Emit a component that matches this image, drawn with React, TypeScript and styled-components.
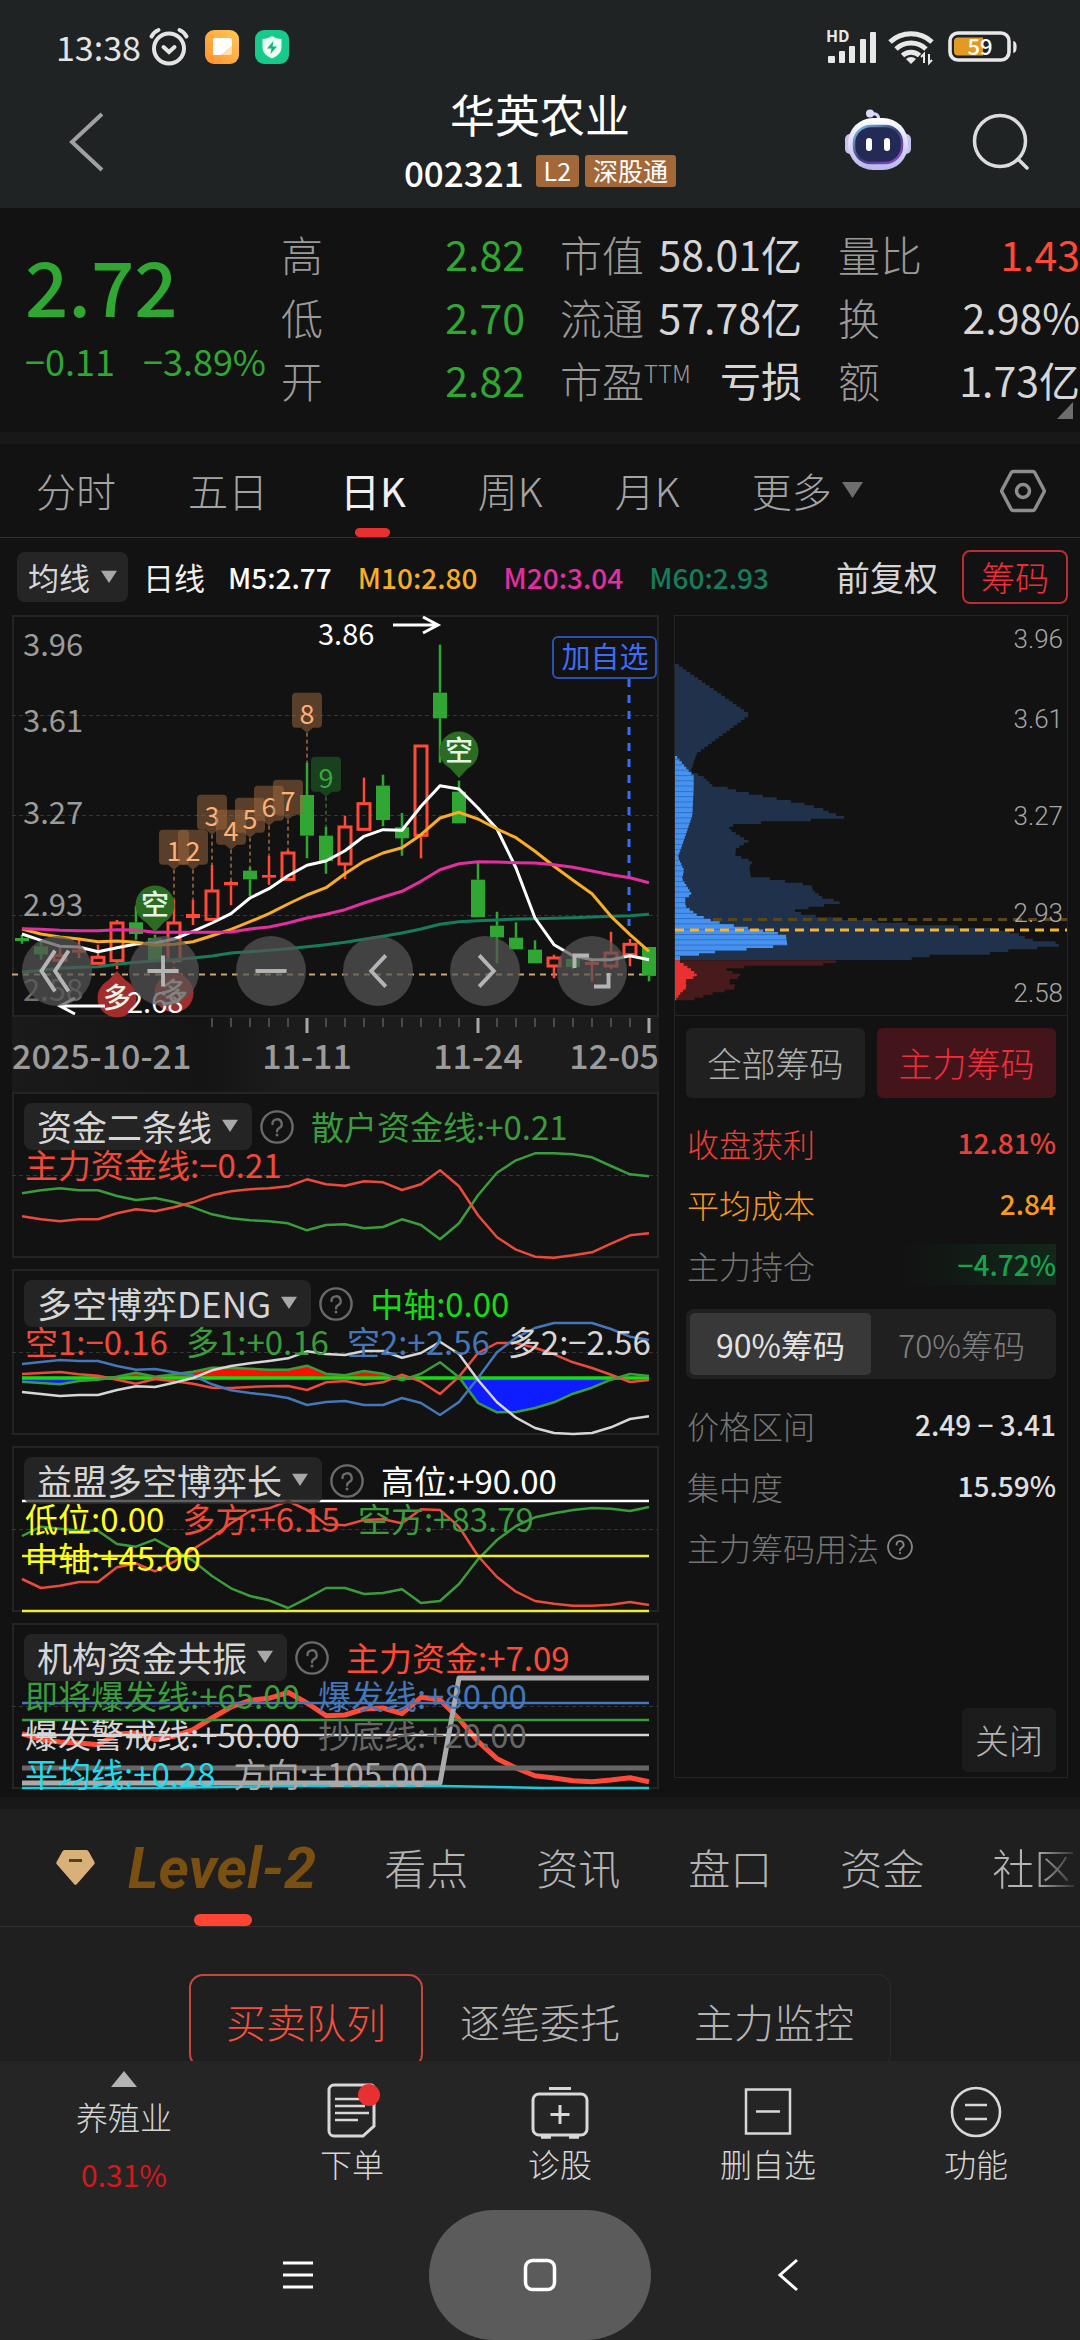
import React from 'react';
import styled, { createGlobalStyle } from 'styled-components';

const color = {
  page: '#121212',
  header: '#202323',
  band: '#181818',
  panel: '#1f1f1f',
  dock: '#252525',
  line: '#242424',
  label: '#9a9a9a',
  value: '#d6d6d6',
  green: '#30a633',
  red: '#ff4a37',
  alert: '#e93030',
};

const GlobalStyle = createGlobalStyle`
  *, *::before, *::after { box-sizing: border-box; }
  body {
    margin: 0;
    background: ${color.page};
    font-family: "Noto Sans CJK SC", "Noto Sans", sans-serif;
    color: ${color.value};
  }
  button {
    font: inherit;
    color: inherit;
    background: none;
    border: 0;
    padding: 0;
    cursor: pointer;
    white-space: nowrap;
  }
  h1, dl, dd, dt, p { margin: 0; font-weight: inherit; }
  svg { display: block; flex: none; overflow: visible; }
`;

const Screen = styled.div`
  display: flex;
  flex-direction: column;
  height: 100vh;
  overflow: hidden;
  line-height: 1;
`;

/* ---------- status bar and title ---------- */

const StatusBar = styled.div`
  display: flex;
  justify-content: space-between;
  align-items: center;
  flex: none;
  height: 93px;
  padding: 0 62px 0 56px;
  background: ${color.header};
`;

const StatusGroup = styled.div<{ $gap: number }>`
  display: flex;
  align-items: center;
  gap: ${(p) => p.$gap}px;
`;

const Clock = styled.span`
  margin-right: -8px;
  font-size: 34px;
  color: #e4e4e4;
`;

const TitleBar = styled.header`
  display: grid;
  grid-template-columns: 1fr auto 1fr;
  flex: none;
  height: 115px;
  padding: 0 50px;
  background: ${color.header};
`;

const BackButton = styled.button`
  justify-self: start;
  align-self: start;
  margin: 19px 0 0 18px;
`;

const TitleStack = styled.div`
  display: flex;
  flex-direction: column;
  align-items: center;
  gap: 17px;
`;

const StockName = styled.h1`
  font-size: 45px;
  line-height: 42px;
  color: #fff;
`;

const CodeRow = styled.div`
  display: flex;
  align-items: center;
  height: 38px;
  gap: 6px;
`;

const Code = styled.span`
  margin-right: 6px;
  font-size: 35px;
  font-weight: 500;
  color: #fff;
`;

const Badge = styled.span`
  padding: 3px 8px 5px;
  border-radius: 3px;
  background: #a3683a;
  font-size: 25px;
  line-height: 24px;
  color: #fff;
`;

const TitleActions = styled.div`
  display: flex;
  justify-content: flex-end;
  align-items: flex-start;
  gap: 62px;
  padding-top: 16px;
`;

/* ---------- quote ---------- */

const Quote = styled.section`
  position: relative;
  display: grid;
  grid-template-columns: 256px 244px 277px 1fr;
  flex: none;
  height: 224px;
  padding: 14px 0 0 25px;
`;

const PriceBlock = styled.div`
  color: ${color.green};
`;

const Price = styled.div`
  padding-top: 20px;
  font-size: 76px;
  font-weight: 500;
  line-height: 84px;
`;

const Change = styled.div`
  display: flex;
  gap: 28px;
  padding-top: 8px;
  font-size: 36px;
  line-height: 52px;
  white-space: nowrap;
`;

const Facts = styled.dl<{ $start: number }>`
  display: grid;
  grid-auto-rows: 63px;
  padding-left: ${(p) => p.$start}px;
`;

const Fact = styled.div`
  display: flex;
  justify-content: space-between;
  align-items: center;
  white-space: nowrap;

  dt { font-size: 42px; font-weight: 300; color: ${color.label}; }
  sup { font-size: 24px; line-height: 0; vertical-align: 15px; }
`;

const FactValue = styled.dd<{ $tone?: string }>`
  font-size: 41px;
  color: ${(p) => p.$tone ?? color.value};
`;

const ExpandMark = styled.svg`
  position: absolute;
  right: 7px;
  bottom: 13px;
`;

const Band = styled.div`
  flex: none;
  height: 12px;
  background: ${color.band};
`;

/* ---------- period tabs ---------- */

const PeriodTabs = styled.nav`
  display: flex;
  align-items: stretch;
  flex: none;
  gap: 72px;
  height: 94px;
  padding: 0 34px 0 36px;
  border-bottom: 1px solid #303030;
`;

const PeriodTab = styled.button<{ $active?: boolean }>`
  display: flex;
  align-items: center;
  gap: 10px;
  position: relative;
  padding-bottom: 2px;
  font-size: 40px;
  font-weight: ${(p) => (p.$active ? 400 : 300)};
  color: ${(p) => (p.$active ? '#f0f0f0' : '#a4a4a4')};

  &::after {
    content: "";
    display: ${(p) => (p.$active ? 'block' : 'none')};
    position: absolute;
    left: 50%;
    bottom: 0;
    width: 35px;
    height: 9px;
    margin-left: -18px;
    border-radius: 5px;
    background: ${color.alert};
  }
`;

const SettingsButton = styled.button`
  margin-left: auto;
`;

/* ---------- averages row ---------- */

const AverageRow = styled.div`
  display: flex;
  align-items: center;
  flex: none;
  height: 77px;
  padding: 0 12px 0 17px;
  white-space: nowrap;
`;

const AverageSelect = styled.button`
  display: flex;
  align-items: center;
  gap: 11px;
  height: 50px;
  padding: 0 11px;
  margin-right: 15px;
  border-radius: 8px;
  background: #252525;
  font-size: 31px;
`;

const AveragePeriod = styled.span`
  margin-right: 23px;
  font-size: 31px;
  color: #f0f0f0;
`;

const Average = styled.span<{ $tone: string }>`
  margin-right: 26px;
  font-size: 28px;
  font-weight: 500;
  color: ${(p) => p.$tone};
`;

const AdjustButton = styled.button`
  margin: 0 24px 0 auto;
  font-size: 34px;
`;

const ChipsToggle = styled.button`
  height: 54px;
  padding: 0 17px;
  border: 2px solid #b92d33;
  border-radius: 8px;
  font-size: 34px;
  font-weight: 300;
  color: #f12d3a;
`;

/* ---------- chart area ---------- */

const ChartArea = styled.main`
  display: grid;
  grid-template-columns: 647fr 394fr;
  flex: none;
  gap: 15px;
  padding: 0 12px 8px;
`;

const ChartColumn = styled.div`
  min-width: 0;
`;

const CandlePanel = styled.section`
  position: relative;
  border: 2px solid ${color.line};

  > svg { width: calc(100% + 4px); height: auto; margin: -2px; }
`;

const ChartTools = styled.div`
  position: absolute;
  left: 8px;
  bottom: 9px;
  display: flex;
  gap: 37px;
`;

const ToolButton = styled.button`
  display: grid;
  place-items: center;
  width: 70px;
  height: 70px;
  border-radius: 50%;
  background: rgba(84, 84, 84, 0.72);
`;

const DateAxis = styled.div`
  height: 75px;
  background: linear-gradient(90deg, #1a1a1a 0, #141414 30%, #1c1c1c 42%, #1c1c1c 100%);

  svg { width: 100%; height: auto; }
`;

const Indicator = styled.section`
  position: relative;
  height: 166px;
  margin-bottom: 11px;
  border: 2px solid ${color.line};

  > svg { position: absolute; left: -2px; top: -2px; width: calc(100% + 4px); height: 166px; }
  &:last-child { margin-bottom: 0; }
`;

const IndicatorBody = styled.div`
  position: relative;
  padding: 9px 0 0 10px;
`;

const IndicatorHead = styled.div`
  display: flex;
  align-items: center;
  height: 47px;
`;

const IndicatorSelect = styled.button`
  display: flex;
  align-items: center;
  gap: 10px;
  height: 47px;
  padding: 0 14px 2px 13px;
  margin-right: 8px;
  border-radius: 8px;
  background: rgba(43, 43, 43, 0.75);
  font-size: 35px;
`;

const HelpButton = styled.button`
  margin-right: 17px;
`;

const ReadoutRow = styled.div`
  display: flex;
  gap: 18px;
  height: 39px;
  padding-left: 1px;
  margin-top: -5px;

  & + & { margin-top: 0; }
`;

const Readout = styled.span<{ $tone: string }>`
  font-size: 33px;
  line-height: 39px;
  white-space: nowrap;
  color: ${(p) => p.$tone};
`;

/* ---------- chips panel ---------- */

const ChipsPanel = styled.aside`
  display: flex;
  flex-direction: column;
  margin-bottom: 11px;
  border: 1px solid ${color.line};
`;

const ChipsChart = styled.div`
  border-bottom: 1px solid ${color.line};

  svg { width: 100%; height: auto; }
`;

const ChipsBody = styled.div`
  display: flex;
  flex: 1;
  flex-direction: column;
  padding: 12px 11px 5px;
`;

const ChoiceRow = styled.div`
  display: grid;
  grid-template-columns: 1fr 1fr;
  gap: 12px;
  margin-bottom: 14px;
`;

const Choice = styled.button<{ $active?: boolean }>`
  height: 70px;
  border-radius: 6px;
  background: ${(p) => (p.$active ? '#43141a' : '#202020')};
  font-size: 34px;
  font-weight: 300;
  color: ${(p) => (p.$active ? '#f12d3a' : '#b0b0b0')};
`;

const ChipFacts = styled.dl`
  display: grid;
  grid-auto-rows: 61px;
`;

const ChipFact = styled.div<{ $tone?: string }>`
  display: flex;
  justify-content: space-between;
  align-items: center;
  padding-left: 1px;
  font-size: 32px;
  font-weight: 300;
  color: ${(p) => p.$tone ?? '#757575'};

  dt { display: flex; align-items: center; gap: 8px; }
`;

const ChipValue = styled.dd<{ $tone: string; $glow?: boolean }>`
  min-width: 155px;
  font-size: 28px;
  font-weight: 500;
  line-height: 41px;
  text-align: right;
  color: ${(p) => p.$tone};
  background: ${(p) => (p.$glow ? 'linear-gradient(90deg, #121212, #11281a)' : 'none')};
`;

const Segments = styled.div`
  display: grid;
  grid-template-columns: 1fr 1fr;
  height: 70px;
  padding: 4px;
  margin: 14px 0 15px;
  border-radius: 8px;
  background: #202020;
`;

const Segment = styled.button<{ $active?: boolean }>`
  border-radius: 5px;
  background: ${(p) => (p.$active ? '#383838' : 'transparent')};
  font-size: 32px;
  font-weight: ${(p) => (p.$active ? 400 : 300)};
  color: ${(p) => (p.$active ? '#e2e2e2' : '#808080')};
`;

const CloseButton = styled.button`
  align-self: flex-end;
  width: 94px;
  height: 64px;
  margin-top: auto;
  border-radius: 6px;
  background: #1c1c1c;
  font-size: 34px;
  font-weight: 300;
  color: #b4b4b4;
`;

/* ---------- detail tabs ---------- */

const Detail = styled.section`
  flex: 1;
  min-height: 0;
  overflow: hidden;
  background: ${color.panel};
`;

const DetailTabs = styled.nav`
  display: flex;
  align-items: stretch;
  gap: 68px;
  height: 118px;
  padding-left: 56px;
  border-bottom: 1px solid #333;
  overflow: hidden;
`;

const DetailTab = styled.button<{ $faded?: boolean }>`
  padding-bottom: 2px;
  font-size: 42px;
  font-weight: 300;
  color: #b4b4b4;
  ${(p) => p.$faded && 'mask-image: linear-gradient(90deg, #000 50%, rgba(0, 0, 0, 0.1));'}
`;

const LevelTab = styled.button`
  position: relative;
  display: flex;
  align-items: center;
  gap: 33px;
  font-family: Roboto, "Liberation Sans", sans-serif;
  font-size: 58px;
  font-weight: 700;
  font-style: italic;
  color: #7a4f12;

  &::after {
    content: "";
    position: absolute;
    left: 138px;
    bottom: 0;
    width: 58px;
    height: 12px;
    border-radius: 6px;
    background: #ff4433;
  }
`;

const QueueTabs = styled.div`
  display: grid;
  grid-template-columns: repeat(3, 1fr);
  width: 65%;
  margin: 47px auto 0;
  border-radius: 14px;
  box-shadow: inset 0 0 0 1px #2b2b2b;
`;

const QueueTab = styled.button<{ $active?: boolean }>`
  height: 94px;
  border: 2px solid ${(p) => (p.$active ? '#c8463c' : 'transparent')};
  border-radius: 14px;
  font-size: 40px;
  font-weight: 300;
  color: ${(p) => (p.$active ? '#f4503f' : '#b4b4b4')};
`;

/* ---------- dock and system navigation ---------- */

const Dock = styled.nav`
  display: grid;
  grid-template-columns: 248fr 208fr 208fr 208fr 208fr;
  flex: none;
  height: 149px;
  background: ${color.dock};
`;

const Sector = styled.button`
  display: flex;
  flex-direction: column;
  align-items: center;
  justify-content: flex-start;
  padding-top: 10px;
  font-size: 32px;
  font-weight: 300;
  line-height: 58px;
`;

const SectorChange = styled.span`
  font-size: 30px;
  font-weight: 400;
  color: #d3191c;
`;

const DockItem = styled.button`
  display: flex;
  flex-direction: column;
  align-items: center;
  padding-top: 21px;
  font-size: 32px;
  line-height: 50px;
  font-weight: 300;
`;

const SystemNav = styled.nav`
  display: flex;
  justify-content: center;
  align-items: center;
  flex: none;
  gap: 115px;
  height: 130px;
  background: ${color.dock};
`;

const SystemButton = styled.button`
  display: grid;
  place-items: center;
  width: 32px;
  height: 130px;
`;

const HomeButton = styled(SystemButton)`
  width: 222px;
  border-radius: 65px;
  background: #5b5b5b;
`;

/* ---------- icons ---------- */

const Caret = ({ up, w = 16, tone = '#a8a8a8' }: { up?: boolean; w?: number; tone?: string }) => (
  <svg width={w} height={Math.round(up ? w * 0.6 : w * 0.8)} viewBox="0 0 20 16" preserveAspectRatio="none" aria-hidden="true">
    <path d={up ? 'M10 0 20 16H0z' : 'M0 1h20L10 16z'} fill={tone} />
  </svg>
);

const Help = ({ size, tone = '#6a6a6a' }: { size: number; tone?: string }) => (
  <svg width={size} height={size} viewBox="0 0 34 34" fill="none" stroke={tone} strokeWidth="2.4" aria-hidden="true">
    <circle cx="17" cy="17" r="15.6" />
    <path d="M12.5 14a4.6 4.6 0 1 1 6.6 4.1c-1.500.8-2.100 1.600-2.100 3.200" strokeLinecap="round" />
    <circle cx="17" cy="25" r="1.500" fill={tone} stroke="none" />
  </svg>
);

const AlarmIcon = () => (
  <svg width="40" height="38" viewBox="0 0 40 38" fill="none" stroke="#e4e4e4" strokeWidth="4" strokeLinecap="round">
    <circle cx="20" cy="20.500" r="15" />
    <path d="M2.500 8.500C4 5.500 6.500 3.200 9.500 2M37.500 8.500C36 5.500 33.500 3.200 30.500 2" />
    <path d="m14.500 19 5.500 5 5.500-5" />
  </svg>
);

const NoteIcon = () => (
  <svg width="34" height="34" viewBox="0 0 34 34">
    <defs>
      <linearGradient id="note" x1="0" y1="1" x2="1" y2="0">
        <stop offset="0" stopColor="#ff8f2e" />
        <stop offset="1" stopColor="#ffca58" />
      </linearGradient>
    </defs>
    <rect width="34" height="34" rx="9" fill="url(#note)" />
    <path d="M10 8h15a2 2 0 0 1 2 2v6L16 25H8V10a2 2 0 0 1 2-2z" fill="#fff" />
    <path d="M27 16v7a2 2 0 0 1-2 2h-9z" fill="#ffe0ae" />
  </svg>
);

const ShieldIcon = () => (
  <svg width="34" height="34" viewBox="0 0 34 34">
    <rect width="34" height="34" rx="9" fill="#17c98b" />
    <path d="M17 6c3 2 6 3 9.500 3v8c0 6-4 9-9.500 11.500C11.500 26 7.500 23 7.500 17V9C11 9 14 8 17 6z" fill="#e9fff6" />
    <path d="M18.500 11 12 18.500h4.500L15.500 24l6.500-7.500h-4.500z" fill="#17b37c" />
  </svg>
);

const SignalIcon = () => (
  <svg width="50" height="34" viewBox="0 0 50 34" fill="#e8e8e8">
    <text x="0" y="12" fontSize="16" fontWeight="700">HD</text>
    <rect x="2" y="26" width="7" height="7" rx="1" />
    <rect x="13" y="21" width="6" height="12" rx="1" />
    <rect x="23" y="16" width="6" height="17" rx="1" />
    <rect x="34" y="9" width="6" height="24" rx="1" />
    <rect x="44" y="2" width="6" height="31" rx="1" />
  </svg>
);

const WifiIcon = () => (
  <svg width="48" height="36" viewBox="0 0 48 36" fill="none" stroke="#e8e8e8" strokeWidth="5">
    <path d="M2 13a31 31 0 0 1 42 0M8 20a22 22 0 0 1 30 0M14.500 26.500a12.500 12.500 0 0 1 17 0" />
    <path d="m23 35-5-5a7 7 0 0 1 10 0z" fill="#e8e8e8" stroke="none" />
    <path d="M36 34v-9l-3 3M41 25v9l3-3" strokeWidth="2" />
  </svg>
);

const BatteryIcon = () => (
  <svg width="70" height="32" viewBox="0 0 70 32">
    <rect x="2" y="2" width="59" height="27" rx="8" fill="none" stroke="#e8e8e8" strokeWidth="3.600" />
    <path d="M66 11c2.500 1 2.500 9 0 10z" fill="#e8e8e8" stroke="#e8e8e8" strokeWidth="1.500" />
    <path d="M10 6.500h25v18H10a4 4 0 0 1-4-4v-10a4 4 0 0 1 4-4z" fill="#e39a24" />
    <text x="32" y="24" fontSize="22" fontWeight="500" fill="#fff" textAnchor="middle">59</text>
  </svg>
);

const RobotIcon = () => (
  <svg width="66" height="62" viewBox="0 0 66 62">
    <defs>
      <linearGradient id="shell" x1="0" y1="0" x2="0" y2="1">
        <stop offset="0" stopColor="#fff" />
        <stop offset="1" stopColor="#b9b5ee" />
      </linearGradient>
      <linearGradient id="rim" x1="0" y1="0" x2="1" y2="1">
        <stop offset="0" stopColor="#7fc4f2" />
        <stop offset="0.500" stopColor="#3a3f77" />
        <stop offset="1" stopColor="#9a45dc" />
      </linearGradient>
    </defs>
    <path d="M33 12c2-6-2-8-7-7" fill="none" stroke="#d9d8f8" strokeWidth="3" strokeLinecap="round" />
    <circle cx="25" cy="4.500" r="4" fill="#dcdaf8" />
    <rect x="0" y="25" width="10" height="20" rx="5" fill="#c5c3ee" />
    <rect x="56" y="25" width="10" height="20" rx="5" fill="#c5c3ee" />
    <rect x="3" y="9" width="60" height="52" rx="25" fill="url(#shell)" />
    <rect x="9" y="17" width="48" height="37" rx="17" fill="#232a55" stroke="url(#rim)" strokeWidth="2.500" />
    <rect x="21" y="29" width="6" height="13" rx="3" fill="#fff" />
    <rect x="39" y="29" width="6" height="13" rx="3" fill="#fff" />
  </svg>
);

const SearchIcon = () => (
  <svg width="57" height="62" viewBox="0 0 57 62" fill="none" stroke="#dcdcdc" strokeWidth="3.500">
    <circle cx="27" cy="32" r="25.500" />
    <path d="m45 50 9 9" strokeLinecap="round" />
  </svg>
);

const HexIcon = () => (
  <svg width="46" height="44" viewBox="0 0 46 44" fill="none" stroke="#8d8d8d" strokeWidth="3.500">
    <path d="M13 2.500h20a2 2 0 0 1 1.700 1L44 21a2 2 0 0 1 0 2l-9.300 17.500a2 2 0 0 1-1.700 1H13a2 2 0 0 1-1.700-1L2 23a2 2 0 0 1 0-2l9.300-17.500a2 2 0 0 1 1.700-1z" />
    <circle cx="23" cy="22" r="6.500" />
  </svg>
);

const DiamondIcon = () => (
  <svg width="39" height="35" viewBox="0 0 39 35">
    <path d="M9 0h21a3 3 0 0 1 2.500 1.300L38.500 12a2 2 0 0 1-.3 2.300L21 34a2 2 0 0 1-3 0L.8 14.300A2 2 0 0 1 .5 12L6.500 1.300A3 3 0 0 1 9 0z" fill="#d9b078" />
    <path d="M13 9h13v3H13z" fill="#54401c" />
  </svg>
);

const OrderIcon = () => (
  <svg width="54" height="56" viewBox="0 0 54 56" fill="none" stroke="#d8d8d8" strokeWidth="3">
    <path d="M9 3h37a3 3 0 0 1 3 3v38L38 54H9a5 5 0 0 1-5-5V8a5 5 0 0 1 5-5z" />
    <path d="M10 17h30M10 24h30M10 31h34M10 38h23" strokeWidth="2.500" />
    <circle cx="44" cy="13" r="11" fill={color.alert} stroke="none" />
  </svg>
);

const DiagnoseIcon = () => (
  <svg width="58" height="56" viewBox="0 0 58 56" fill="none" stroke="#d8d8d8" strokeWidth="3">
    <path d="M18 6.500h22" />
    <rect x="2" y="12" width="54" height="41" rx="6" />
    <path d="M29 23v19M19.500 32.500h19" />
    <path d="M10 55h10M38 55h10" strokeWidth="3.500" />
  </svg>
);

const RemoveIcon = () => (
  <svg width="50" height="56" viewBox="0 0 50 56" fill="none" stroke="#d8d8d8" strokeWidth="2.500">
    <path d="M3 7.500h44v44H3zM13 29.500h24" />
  </svg>
);

const MoreIcon = () => (
  <svg width="52" height="56" viewBox="0 0 52 56" fill="none" stroke="#d8d8d8" strokeWidth="2.600">
    <circle cx="26" cy="30" r="24" />
    <path d="M15 23h22M15 37h22" />
  </svg>
);

/* ---------- chart data: one reading for each trading day, measured down the plot ---------- */

const dayX = (i: number) => 10 + 19 * i;
const path = (ys: number[], top: number) =>
  ys.map((v, i) => `${i ? 'L' : 'M'}${dayX(i)} ${((v - top) / 3).toFixed(1)}`).join('');

type Candle = [up: 0 | 1, high: number, top: number, bottom: number, low: number];
const candles: Candle[] = [
  [0, 1006, 1015, 1024, 1032], [0, 1020, 1040, 1064, 1080], [1, 1045, 1065, 1085, 1110], [1, 1018, 1050, 1059, 1075],
  [1, 1035, 1070, 1094, 1094], [1, 961, 967, 1086, 1108], [0, 918, 968, 1003, 1020], [0, 1005, 1015, 1082, 1082],
  [1, 900, 967, 1086, 1092], [1, 900, 943, 955, 976], [1, 796, 871, 962, 962], [1, 843, 847, 857, 917],
  [0, 803, 813, 839, 890], [1, 768, 826, 834, 855], [1, 750, 757, 842, 842], [0, 490, 586, 708, 776],
  [0, 681, 708, 784, 822], [1, 648, 679, 796, 838], [1, 534, 609, 692, 692], [0, 525, 558, 661, 680],
  [0, 640, 683, 716, 768], [1, 436, 436, 710, 776], [0, 135, 279, 356, 489], [0, 543, 576, 671, 671],
  [0, 790, 840, 953, 953], [0, 936, 978, 1013, 1091], [0, 968, 1014, 1049, 1049], [0, 1022, 1050, 1091, 1091],
  [1, 1065, 1072, 1102, 1136], [0, 1060, 1078, 1102, 1108], [1, 1080, 1087, 1096, 1145], [1, 996, 1057, 1102, 1108],
  [1, 1018, 1031, 1068, 1100], [0, 1042, 1042, 1128, 1145],
];

const m5 = [1003, 1022, 1040, 1042, 1056, 1044, 1033, 1030, 1018, 995, 970, 942, 895, 867, 828, 797, 784, 753, 710, 690, 692, 620, 558, 568, 625, 688, 805, 955, 1035, 1068, 1080, 1080, 1068, 1080];
const m10 = [988, 1003, 1012, 1018, 1026, 1024, 1028, 1037, 1034, 1026, 1008, 989, 966, 942, 913, 886, 864, 822, 785, 760, 744, 705, 655, 638, 658, 688, 714, 755, 800, 842, 882, 950, 1005, 1055];
const m20 = [987, 989, 992, 993, 993, 990, 991, 998, 998, 998, 998, 997, 988, 982, 970, 955, 944, 930, 910, 892, 875, 845, 810, 792, 786, 787, 789, 790, 795, 803, 814, 825, 834, 849];
const m60 = [1118, 1112, 1106, 1103, 1101, 1094, 1088, 1084, 1080, 1075, 1069, 1060, 1056, 1052, 1047, 1041, 1035, 1028, 1019, 1010, 1000, 988, 974, 966, 963, 961, 958, 957, 956, 954, 952, 950, 948, 944];

const counts = [
  { n: 1, day: 8, y: 690 }, { n: 2, day: 9, y: 690 }, { n: 3, day: 10, y: 585 }, { n: 4, day: 11, y: 630 },
  { n: 5, day: 12, y: 594 }, { n: 6, day: 13, y: 558 }, { n: 7, day: 14, y: 540 }, { n: 8, day: 15, y: 279 },
  { n: 9, day: 16, y: 471 },
];

const TOP = 46;
const py = (v: number) => (v - TOP) / 3;

const CandleBar = ({ i, c }: { i: number; c: Candle }) => {
  const [up, high, top, bottom, low] = c;
  const tone = up ? color.red : color.green;
  const x = dayX(i);
  const hollow = up && bottom - top > 14;
  const inset = hollow ? 1 : 0;
  return (
    <g stroke={tone} fill={hollow ? 'none' : tone}>
      <path d={`M${x} ${py(high)}V${py(top)}M${x} ${py(bottom)}V${py(low)}`} strokeWidth="2.500" />
      <rect
        x={x - 7 + inset}
        y={py(top) + inset}
        width={14 - inset * 2}
        height={(bottom - top) / 3 - inset * 2}
        strokeWidth={hollow ? 3 : 0}
      />
    </g>
  );
};

const Bubble = ({ day, y, tone, text, up }: { day: number; y: number; tone: string; text: string; up?: boolean }) => {
  const x = dayX(day);
  const s = up ? -1 : 1;
  return (
    <g>
      <circle cx={x} cy={y} r="19.500" fill={tone} />
      <path d={`M${x - 12} ${y + 14 * s}L${x} ${y + 27 * s}L${x + 12} ${y + 14 * s}z`} fill={tone} />
      <text x={x} y={y + 10} fontSize="28" fontWeight="500" fill="#e6f4e2" textAnchor="middle">{text}</text>
    </g>
  );
};

const CandleChart = () => (
  <svg viewBox="0 0 647 402" fontFamily="inherit">
    <g stroke="#363636" strokeDasharray="4 3">
      <path d="M0 100.500H645M0 200.500H645M0 300.500H645" />
    </g>
    <path d="M0 359.500H645" stroke="#cba873" strokeWidth="2" strokeDasharray="6 5" />
    <g fontSize="31" fill="#9b9b9b">
      <text x="11" y="41">3.96</text>
      <text x="11" y="117">3.61</text>
      <text x="11" y="209">3.27</text>
      <text x="11" y="301">2.93</text>
      <text x="11" y="386" fill="#707070">2.58</text>
    </g>
    {candles.map((c, i) => <CandleBar key={i} i={i} c={c} />)}
    <path d="M617 64V311" stroke="#3c6af0" strokeWidth="3" strokeDasharray="8 8" />
    <g fill="none" strokeWidth="3" strokeLinejoin="round">
      <path d={path(m60, TOP)} stroke="#187c5c" />
      <path d={path(m5, TOP)} stroke="#fff" />
      <path d={path(m10, TOP)} stroke="#f7ad27" />
      <path d={path(m20, TOP)} stroke="#e22fa0" />
    </g>
    {counts.map(({ n, day, y }) => {
      const x = dayX(day);
      const t = py(y);
      const last = n === 9;
      return (
        <g key={n}>
          <path d={`M${x} ${t + 40}V${py(candles[day][1])}`} stroke={last ? '#3d9c40' : '#e79a62'} strokeDasharray="4 3" />
          <path
            d={`M${x - 11} ${t}h22a4 4 0 0 1 4 4v27a4 4 0 0 1-4 4h-5l-6 5-6-5h-5a4 4 0 0 1-4-4v-27a4 4 0 0 1 4-4z`}
            fill={last ? '#1c4a20' : '#a06a40'}
            fillOpacity={last ? 0.85 : 0.5}
          />
          <text x={x} y={t + 31} fontSize="27" textAnchor="middle" fill={last ? '#37a83a' : '#ffb077'}>{n}</text>
        </g>
      );
    })}
    <Bubble day={7} y={290} tone="#2b6b22" text="空" />
    <Bubble day={23} y={136} tone="#2b6b22" text="空" />
    <Bubble day={5} y={383} tone="#a32d2d" text="多" up />
    <Bubble day={8} y={378} tone="#a32d2d" text="多" up />
    <g fill="none" stroke="#fff" strokeWidth="3">
      <path d="M381 10H426M411 2l15 8-15 8" />
      <path d="M93 391H49M63 383l-15 8 15 8" />
    </g>
    <g fontSize="29" fill="#fff">
      <text x="306" y="30">3.86</text>
      <text x="115" y="398">2.68</text>
    </g>
    <rect x="541" y="22" width="103" height="41" rx="5" fill="#121212" stroke="#2c4fb0" strokeWidth="2" />
    <text x="593" y="53" fontSize="29" textAnchor="middle" fill="#3e6cf2">加自选</text>
  </svg>
);

const AxisChart = () => (
  <svg viewBox="0 0 647 75" fontFamily="inherit">
    {candles.map((_, i) => {
      const major = i === 15 || i === 24 || i === 33;
      if (i < 10) return null;
      return <path key={i} d={`M${dayX(i)} 1V${major ? 16 : 10}`} stroke={major ? '#a8a8a8' : '#4a4a4a'} strokeWidth={major ? 3 : 2} />;
    })}
    <g fontSize="34" fontWeight="500" fill="#9b9b9b">
      <text x="0" y="52">2025-10-21</text>
      <text x={dayX(15)} y="52" textAnchor="middle">11-11</text>
      <text x={dayX(24)} y="52" textAnchor="middle">11-24</text>
      <text x="647" y="52" textAnchor="end">12-05</text>
    </g>
  </svg>
);

/* ---------- chips distribution ---------- */

type Profile = [width: number, y: number][];
const chipsAll: Profile = [[45, 182], [270, 338], [110, 455], [92, 508], [108, 515], [130, 525], [157, 550], [200, 557], [235, 568], [350, 590], [430, 605], [490, 622], [510, 632], [552, 646], [440, 655], [330, 660], [222, 668], [205, 680], [265, 718], [228, 740], [226, 760], [278, 778], [268, 795], [272, 822], [318, 828], [375, 838], [455, 850], [458, 865], [490, 888], [552, 900], [500, 908], [470, 916], [396, 922], [432, 938], [520, 948], [640, 957], [790, 970], [1000, 978], [1070, 995], [1110, 1013], [1221, 1026], [1160, 1036], [1045, 1044], [1045, 1052], [880, 1058], [755, 1065], [755, 1078]];
const chipsMain: Profile = [[45, 458], [85, 505], [101, 522], [101, 560], [97, 640], [75, 705], [54, 765], [72, 805], [66, 830], [95, 876], [76, 890], [76, 912], [110, 938], [168, 960], [275, 980], [345, 992], [378, 1000], [382, 1030], [318, 1036], [240, 1044], [165, 1050], [105, 1060], [60, 1066], [60, 1078]];
const profitAll: Profile = [[528, 1079], [525, 1086], [315, 1092], [190, 1098], [210, 1108], [248, 1122], [200, 1138], [234, 1156], [190, 1168], [145, 1178], [115, 1188], [85, 1196], [45, 1198]];
const profitMain: Profile = [[60, 1079], [100, 1108], [113, 1122], [76, 1136], [80, 1156], [60, 1176], [48, 1192]];

const steps = (profile: Profile) => {
  let d = '';
  let seg = 0;
  for (let y = profile[0][1]; y < profile[profile.length - 1][1]; y += 8) {
    while (seg < profile.length - 2 && profile[seg + 1][1] < y) seg += 1;
    const [w0, y0] = profile[seg];
    const [w1, y1] = profile[seg + 1];
    const w = w0 + ((w1 - w0) * (y - y0)) / (y1 - y0);
    d += `M0 ${py(y).toFixed(2)}h${((w - 45) / 3).toFixed(1)}v2.700H0z`;
  }
  return d;
};

const ChipsDistribution = () => (
  <svg viewBox="0 0 392 399" fontFamily="Roboto, 'Liberation Sans', sans-serif">
    <defs>
      <pattern id="stripes" width="8" height="5.300" patternUnits="userSpaceOnUse">
        <rect width="8" height="1" fill="#0b2f66" fillOpacity="0.350" />
      </pattern>
    </defs>
    <path d={steps(chipsAll)} fill="#20324b" />
    <path d={steps(chipsMain)} fill="#4692f0" />
    <path d={steps(chipsMain)} fill="url(#stripes)" />
    <path d={steps(profitAll)} fill="#471a1b" />
    <path d={steps(profitMain)} fill="#ea3131" />
    <path d="M38 303.500H392" stroke="#5a4618" strokeWidth="3" strokeDasharray="9 6" />
    <path d="M0 314H392" stroke="#f5b430" strokeWidth="3" strokeDasharray="9 6" />
    <g fontSize="26" fontWeight="300" fill="#a6a6a6" textAnchor="end">
      <text x="388" y="32">3.96</text>
      <text x="388" y="112">3.61</text>
      <text x="388" y="209">3.27</text>
      <text x="388" y="306">2.93</text>
      <text x="388" y="386">2.58</text>
    </g>
  </svg>
);

/* ---------- indicators ---------- */

const retail = [342, 333, 327, 333, 333, 350, 362, 356, 368, 384, 405, 417, 423, 426, 432, 453, 437, 435, 447, 443, 420, 437, 480, 432, 348, 280, 243, 222, 222, 225, 234, 260, 285, 291];
const mainFund = [411, 420, 426, 420, 420, 402, 390, 396, 384, 369, 348, 336, 330, 327, 321, 300, 315, 319, 306, 309, 332, 315, 273, 321, 408, 474, 511, 532, 535, 528, 519, 493, 468, 462];
const short2 = [855, 849, 843, 846, 846, 861, 872, 870, 880, 889, 916, 934, 942, 948, 957, 978, 969, 966, 978, 978, 957, 972, 1008, 969, 897, 820, 776, 747, 732, 732, 732, 750, 773, 783];
const long2 = [939, 945, 951, 948, 948, 933, 922, 924, 911, 897, 874, 861, 853, 846, 838, 817, 825, 828, 816, 816, 836, 822, 788, 825, 903, 970, 1016, 1047, 1062, 1065, 1062, 1045, 1020, 1012];
const short1 = [885, 882, 879, 886, 890, 902, 914, 900, 907, 914, 926, 927, 924, 922, 921, 933, 910, 906, 917, 910, 887, 908, 945, 893, 822, 792, 792, 806, 826, 850, 867, 887, 909, 903];
const long1 = [908, 912, 916, 906, 902, 893, 881, 893, 886, 878, 866, 866, 869, 872, 872, 860, 884, 889, 876, 884, 904, 884, 850, 895, 972, 1000, 999, 987, 970, 944, 926, 902, 885, 891];
const bears = [318, 290, 296, 302, 302, 342, 350, 328, 360, 392, 438, 475, 498, 511, 534, 505, 474, 474, 492, 489, 478, 519, 513, 462, 388, 330, 288, 262, 250, 240, 234, 236, 243, 231];
const bulls = [447, 474, 467, 456, 456, 412, 400, 424, 395, 358, 322, 280, 244, 235, 213, 240, 283, 286, 270, 268, 280, 238, 240, 290, 378, 441, 485, 513, 521, 527, 527, 524, 516, 525];
const fund = [912, 930, 937, 940, 945, 913, 910, 930, 920, 900, 865, 832, 812, 806, 788, 820, 858, 856, 838, 835, 852, 803, 810, 868, 935, 987, 1015, 1038, 1045, 1053, 1056, 1051, 1044, 1056];

const Plot = ({ children }: { children: React.ReactNode }) => (
  <svg viewBox="0 0 647 166" preserveAspectRatio="none" fill="none" strokeWidth="2.500" strokeLinejoin="round" aria-hidden="true">
    <path d="M0 83.500H645" stroke="#363636" strokeWidth="1" strokeDasharray="4 3" />
    {children}
  </svg>
);

const level = (y: number) => `M10 ${y}H637`;

const indicators = [
  {
    name: '资金二条线',
    head: ['散户资金线:+0.21', '#3a9c3c'],
    rows: [[['主力资金线:−0.21', '#ef4a3a']]],
    plot: (
      <>
        <path d={path(retail, 38)} stroke="#3a9c3c" />
        <path d={path(mainFund, 38)} stroke="#ea4b3c" />
      </>
    ),
  },
  {
    name: '多空博弈DENG',
    head: ['中轴:0.00', '#14dc14'],
    rows: [[['空1:−0.16', '#ef4a3a'], ['多1:+0.16', '#3a9c3c'], ['空2:+2.56', '#4576b8'], ['多2:−2.56', '#d6d6d6']]],
    plot: (
      <>
        <clipPath id="above"><rect width="390" height="109" /></clipPath>
        <clipPath id="below"><rect y="109" width="647" height="57" /></clipPath>
        <path d={`${path(long1, 570)}V109H10z`} fill="#ff0d00" clipPath="url(#above)" />
        <path d={`${path(long1, 570)}V109H10z`} fill="#0d1dff" clipPath="url(#below)" />
        <path d={level(109)} stroke="#14dc14" strokeWidth="3.500" />
        <path d={path(short1, 570)} stroke="#ea4b3c" />
        <path d={path(long1, 570)} stroke="#3a9c3c" />
        <path d={path(short2, 570)} stroke="#4576b8" />
        <path d={path(long2, 570)} stroke="#d6d6d6" />
      </>
    ),
  },
  {
    name: '益盟多空博弈长',
    head: ['高位:+90.00', '#ffffff'],
    rows: [
      [['低位:0.00', '#ffff20'], ['多方:+6.15', '#ef4a3a'], ['空方:+83.79', '#3a9c3c']],
      [['中轴:+45.00', '#ffff20']],
    ],
    plot: (
      <>
        <path d={level(55)} stroke="#fff" />
        <path d={path(bulls, 48)} stroke="#ea4b3c" />
        <path d={path(bears, 48)} stroke="#3a9c3c" />
        <path d={`${level(110)}${level(165)}`} stroke="#eeee30" />
      </>
    ),
  },
  {
    name: '机构资金共振',
    head: ['主力资金:+7.09', '#ff4a37'],
    rows: [
      [['即将爆发线:+65.00', '#3a9c3c'], ['爆发线:+80.00', '#4576b8']],
      [['爆发警戒线:+50.00', '#d6d6d6'], ['抄底线:+20.00', '#666666']],
      [['平均线:+0.28', '#1fdcec'], ['方向:+105.00', '#a8a8a8']],
    ],
    plot: (
      <>
        <path d={path(fund, 580)} stroke="#ff4a37" strokeWidth="5" />
        <path d={level(80)} stroke="#4576b8" />
        <path d={level(97)} stroke="#3a9c3c" />
        <path d={level(112)} stroke="#d6d6d6" />
        <path d={level(145)} stroke="#666" strokeWidth="5" />
        <path d={`M10 160H${dayX(22)}L${dayX(23)} 55H637`} stroke="#aaa" strokeWidth="5" />
        <path d="M10 165H140L280 163H428L530 165H637" stroke="#1fc8d8" />
      </>
    ),
  },
] as const;

const quoteFacts = [
  { start: 0, rows: [['高', '2.82', color.green], ['低', '2.70', color.green], ['开', '2.82', color.green]] },
  { start: 35, rows: [['市值', '58.01亿'], ['流通', '57.78亿'], ['市盈', '亏损']] },
  { start: 36, rows: [['量比', '1.43', color.red], ['换', '2.98%'], ['额', '1.73亿']] },
];

const toolIcons = [
  ['后退', 'M33 15 19 36l14 21M47 15 33 36l14 21'],
  ['放大', 'M18 36h32M34 20v32'],
  ['缩小', 'M19 36h32'],
  ['向左', 'M43 20 28 36l15 16'],
  ['向右', 'M29 20l15 16-15 16'],
  ['全屏', 'M17 33V20h15M37 52h15V38'],
] as const;

export default function App() {
  return (
    <Screen>
      <GlobalStyle />
      <StatusBar>
        <StatusGroup $gap={16}>
          <Clock>13:38</Clock>
          <AlarmIcon />
          <NoteIcon />
          <ShieldIcon />
        </StatusGroup>
        <StatusGroup $gap={12}>
          <SignalIcon />
          <WifiIcon />
          <BatteryIcon />
        </StatusGroup>
      </StatusBar>

      <TitleBar>
        <BackButton aria-label="返回">
          <svg width="36" height="60" viewBox="0 0 36 60" fill="none" stroke="#a0a0a0" strokeWidth="4">
            <path d="M34 2 4 30l30 28" />
          </svg>
        </BackButton>
        <TitleStack>
          <StockName>华英农业</StockName>
          <CodeRow>
            <Code>002321</Code>
            <Badge>L2</Badge>
            <Badge>深股通</Badge>
          </CodeRow>
        </TitleStack>
        <TitleActions>
          <button aria-label="智能助手"><RobotIcon /></button>
          <button aria-label="搜索"><SearchIcon /></button>
        </TitleActions>
      </TitleBar>

      <Quote>
        <PriceBlock>
          <Price>2.72</Price>
          <Change><span>−0.11</span><span>−3.89%</span></Change>
        </PriceBlock>
        {quoteFacts.map(({ start, rows }) => (
          <Facts key={start} $start={start}>
            {rows.map(([label, value, tone]) => (
              <Fact key={label}>
                <dt>{label}{label === '市盈' && <sup>TTM</sup>}</dt>
                <FactValue $tone={tone}>{value}</FactValue>
              </Fact>
            ))}
          </Facts>
        ))}
        <ExpandMark width="16" height="17" viewBox="0 0 16 17"><path d="M16 0v17H0z" fill="#6e6e6e" /></ExpandMark>
      </Quote>
      <Band />

      <PeriodTabs>
        <PeriodTab>分时</PeriodTab>
        <PeriodTab>五日</PeriodTab>
        <PeriodTab $active>日K</PeriodTab>
        <PeriodTab>周K</PeriodTab>
        <PeriodTab>月K</PeriodTab>
        <PeriodTab>更多<Caret w={21} tone="#6e6e6e" /></PeriodTab>
        <SettingsButton aria-label="设置"><HexIcon /></SettingsButton>
      </PeriodTabs>

      <AverageRow>
        <AverageSelect>均线<Caret /></AverageSelect>
        <AveragePeriod>日线</AveragePeriod>
        <Average $tone="#ffffff">M5:2.77</Average>
        <Average $tone="#f7ad27">M10:2.80</Average>
        <Average $tone="#e22fa0">M20:3.04</Average>
        <Average $tone="#187c5c">M60:2.93</Average>
        <AdjustButton>前复权</AdjustButton>
        <ChipsToggle>筹码</ChipsToggle>
      </AverageRow>

      <ChartArea>
        <ChartColumn>
          <CandlePanel>
            <CandleChart />
            <ChartTools>
              {toolIcons.map(([name, d]) => (
                <ToolButton key={name} aria-label={name}>
                  <svg width="70" height="70" viewBox="0 0 70 72" fill="none" stroke="#b4b4b4" strokeWidth="4">
                    <path d={d} />
                  </svg>
                </ToolButton>
              ))}
            </ChartTools>
          </CandlePanel>
          <DateAxis><AxisChart /></DateAxis>
          {indicators.map(({ name, head, rows, plot }) => (
            <Indicator key={name}>
              <Plot>{plot}</Plot>
              <IndicatorBody>
                <IndicatorHead>
                  <IndicatorSelect>{name}<Caret /></IndicatorSelect>
                  <HelpButton aria-label="说明"><Help size={34} /></HelpButton>
                  <Readout $tone={head[1]}>{head[0]}</Readout>
                </IndicatorHead>
                {rows.map((row, i) => (
                  <ReadoutRow key={i}>
                    {row.map(([text, tone]) => <Readout key={text} $tone={tone}>{text}</Readout>)}
                  </ReadoutRow>
                ))}
              </IndicatorBody>
            </Indicator>
          ))}
        </ChartColumn>

        <ChipsPanel>
          <ChipsChart><ChipsDistribution /></ChipsChart>
          <ChipsBody>
            <ChoiceRow>
              <Choice>全部筹码</Choice>
              <Choice $active>主力筹码</Choice>
            </ChoiceRow>
            <ChipFacts>
              <ChipFact $tone="#ea4038"><dt>收盘获利</dt><ChipValue $tone="#ea4038">12.81%</ChipValue></ChipFact>
              <ChipFact $tone="#f99a1c"><dt>平均成本</dt><ChipValue $tone="#f99a1c">2.84</ChipValue></ChipFact>
              <ChipFact><dt>主力持仓</dt><ChipValue $tone="#19a24c" $glow>−4.72%</ChipValue></ChipFact>
            </ChipFacts>
            <Segments>
              <Segment $active>90%筹码</Segment>
              <Segment>70%筹码</Segment>
            </Segments>
            <ChipFacts>
              <ChipFact><dt>价格区间</dt><ChipValue $tone="#e0e0e0">2.49 − 3.41</ChipValue></ChipFact>
              <ChipFact><dt>集中度</dt><ChipValue $tone="#e0e0e0">15.59%</ChipValue></ChipFact>
              <ChipFact><dt>主力筹码用法<Help size={26} tone="#858585" /></dt></ChipFact>
            </ChipFacts>
            <CloseButton>关闭</CloseButton>
          </ChipsBody>
        </ChipsPanel>
      </ChartArea>
      <Band />

      <Detail>
        <DetailTabs>
          <LevelTab><DiamondIcon />Level-2</LevelTab>
          <DetailTab>看点</DetailTab>
          <DetailTab>资讯</DetailTab>
          <DetailTab>盘口</DetailTab>
          <DetailTab>资金</DetailTab>
          <DetailTab $faded>社区</DetailTab>
        </DetailTabs>
        <QueueTabs>
          <QueueTab $active>买卖队列</QueueTab>
          <QueueTab>逐笔委托</QueueTab>
          <QueueTab>主力监控</QueueTab>
        </QueueTabs>
      </Detail>

      <Dock>
        <Sector><Caret up w={26} tone="#b4b4b4" />养殖业<SectorChange>0.31%</SectorChange></Sector>
        <DockItem><OrderIcon />下单</DockItem>
        <DockItem><DiagnoseIcon />诊股</DockItem>
        <DockItem><RemoveIcon />删自选</DockItem>
        <DockItem><MoreIcon />功能</DockItem>
      </Dock>
      <SystemNav>
        <SystemButton aria-label="最近任务">
          <svg width="32" height="32" viewBox="0 0 32 32" stroke="#fff" strokeWidth="3"><path d="M1 4h30M1 16h30M1 28h30" /></svg>
        </SystemButton>
        <HomeButton aria-label="主屏幕">
          <svg width="34" height="34" viewBox="0 0 34 34" fill="none" stroke="#fff" strokeWidth="3.500"><rect x="2.500" y="2.500" width="29" height="29" rx="7" /></svg>
        </HomeButton>
        <SystemButton aria-label="返回上一页">
          <svg width="32" height="34" viewBox="0 0 32 34" fill="none" stroke="#fff" strokeWidth="3"><path d="M31 2 14 17l17 15" /></svg>
        </SystemButton>
      </SystemNav>
    </Screen>
  );
}
